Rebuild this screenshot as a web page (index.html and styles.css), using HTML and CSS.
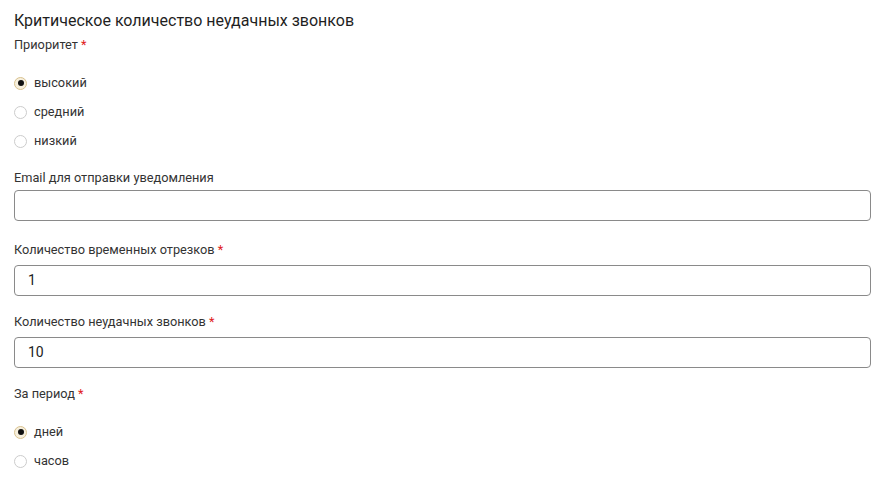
FILE: index.html
```html
<!DOCTYPE html>
<html lang="ru">
<head>
<meta charset="utf-8">
<link rel="stylesheet" href="styles.css">
</head>
<body>
<form class="form">
  <h2 class="title">Критическое количество неудачных звонков</h2>
  <div class="field">
    <div class="label">Приоритет <span class="req">*</span></div>
    <div class="radios">
      <label class="radio"><span class="dot checked"></span>высокий</label>
      <label class="radio"><span class="dot"></span>средний</label>
      <label class="radio"><span class="dot"></span>низкий</label>
    </div>
  </div>
  <div class="field">
    <div class="label">Email для отправки уведомления</div>
    <div class="input"></div>
  </div>
  <div class="field field-req">
    <div class="label">Количество временных отрезков <span class="req">*</span></div>
    <div class="input">1</div>
  </div>
  <div class="field field-req">
    <div class="label">Количество неудачных звонков <span class="req">*</span></div>
    <div class="input">10</div>
  </div>
  <div class="field">
    <div class="label">За период <span class="req">*</span></div>
    <div class="radios">
      <label class="radio"><span class="dot checked"></span>дней</label>
      <label class="radio"><span class="dot"></span>часов</label>
    </div>
  </div>
</form>
</body>
</html>
```

FILE: styles.css
```css
html, body { margin: 0; padding: 0; background: #fff; }
body {
  font-family: Roboto, "Liberation Sans", sans-serif;
  color: #222;
}
.form {
  padding: 10px 18px 0 14px;
  display: flex;
  flex-direction: column;
}
.title {
  margin: 0;
  font-size: 16px;
  font-weight: 400;
  line-height: 22px;
  color: #1f1f1f;
}
.field { display: flex; flex-direction: column; }
.label {
  font-size: 12.75px;
  line-height: 18px;
  color: #333;
  margin-top: 4px;
}
.req { color: #e02020; }
.field + .field .label { margin-top: 20px; }
.field-req + .field .label { margin-top: 17px; }
.radios {
  display: flex;
  flex-direction: column;
  padding-top: 19px;
  gap: 11px;
}
.radio {
  display: flex;
  align-items: center;
  height: 18px;
  font-size: 12.75px;
  color: #333;
}
.dot {
  width: 11px;
  height: 11px;
  border: 1px solid #cccccc;
  border-radius: 50%;
  margin-right: 7px;
  box-sizing: content-box;
  display: flex;
  align-items: center;
  justify-content: center;
  position: relative;
  top: 1px;
}
.dot.checked {
  border-color: #d9c28f;
  background: #f6efdd;
}
.dot.checked::after {
  content: "";
  width: 6px;
  height: 6px;
  border-radius: 50%;
  background: #111;
}
.input {
  margin-top: 3px;
  height: 29px;
  border: 1px solid #8a8a8a;
  border-radius: 4px;
  font-size: 14px;
  line-height: 29px;
  padding: 0 13px;
  color: #222;
}
.field-req .input { margin-top: 6px; }
```
